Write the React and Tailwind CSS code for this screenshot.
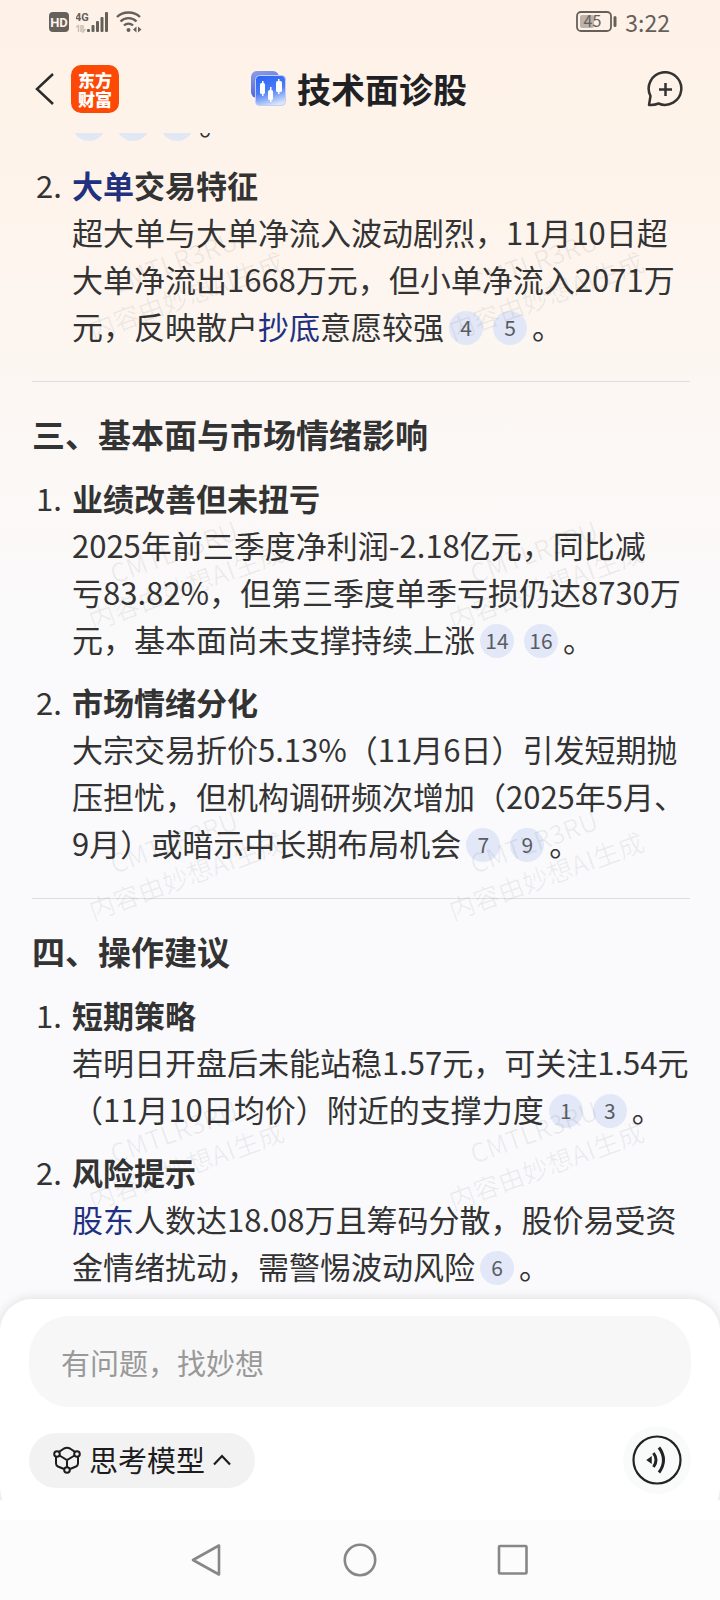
import { Fragment } from 'react'

const sections = [
  {
    items: [
      {
        no: 2,
        title: [{ term: '大单' }, '交易特征'],
        body: ['超大单与大单净流入波动剧烈，11月10日超大单净流出1668万元，但小单净流入2071万元，反映散户', { term: '抄底' }, '意愿较强'],
        refs: [4, 5],
      },
    ],
  },
  {
    heading: '三、基本面与市场情绪影响',
    items: [
      {
        no: 1,
        title: ['业绩改善但未扭亏'],
        body: ['2025年前三季度净利润-2.18亿元，同比减', { keep: '亏83.82%，' }, '但第三季度单季亏损仍达8730万元，基本面尚未支撑持续上涨'],
        refs: [14, 16],
      },
      {
        no: 2,
        title: ['市场情绪分化'],
        body: ['大宗交易折价5.13%（11月6日）引发短期抛压担忧，但机构调研频次增加（2025年5月、9月）或暗示中长期布局机会'],
        refs: [7, 9],
      },
    ],
  },
  {
    heading: '四、操作建议',
    items: [
      {
        no: 1,
        title: ['短期策略'],
        body: ['若明日开盘后未能站稳1.57元，可关注1.54元（11月10日均价）附近的支撑力度'],
        refs: [1, 3],
      },
      {
        no: 2,
        title: ['风险提示'],
        body: [{ term: '股东' }, '人数达18.08万且筹码分散，股价易受资金情绪扰动，需警惕波动风险'],
        refs: [6],
      },
    ],
  },
]

function RichText({ parts }) {
  return parts.map((part, i) => {
    if (part.term) {
      return <a key={i} href="#" className="text-[#22317f]">{part.term}</a>
    }
    if (part.keep) {
      return <span key={i} className="whitespace-nowrap">{part.keep}</span>
    }
    return <Fragment key={i}>{part}</Fragment>
  })
}

function RefChip({ children }) {
  return (
    <button className="mx-[5px] inline-flex size-[34px] items-center justify-center rounded-full bg-[#dfe6f7]/90 align-[3px] text-[21px] leading-none font-normal text-[#5a5c63]">
      {children}
    </button>
  )
}

function StatusBar() {
  return (
    <div className="flex h-11 shrink-0 items-center justify-between pr-[50px] pl-[49px] text-[#66605b]">
      <div className="flex items-center gap-[7px]">
        <svg className="size-5" viewBox="0 0 20 20">
          <rect x="0" y="0" width="20" height="20" rx="4" fill="currentColor" />
          <text x="10" y="15" textAnchor="middle" fontSize="13" fontWeight="700" fill="#fef2e8" fontFamily="Roboto, sans-serif">HD</text>
        </svg>
        {/* signal */}
        <svg className="h-[22px] w-[33px]" viewBox="0 0 33 22" fill="currentColor">
          <text x="-1" y="10" fontSize="11" fontWeight="700" fontFamily="Roboto, sans-serif">4G</text>
          <path d="M0 16l2.500-1.500V21M5 14v7M7 14v7l2.500-3" fill="none" stroke="#c9bfb6" strokeWidth="1.500" />
          <rect x="11" y="18" width="3" height="3" rx="1" />
          <rect x="15.500" y="14" width="3" height="7" rx="1" />
          <rect x="20" y="10" width="3" height="11" rx="1" />
          <rect x="24.500" y="6" width="3" height="15" rx="1" />
          <rect x="29" y="1" width="3" height="20" rx="1" />
        </svg>
        {/* wifi */}
        <svg className="h-[22px] w-[26px]" viewBox="0 0 26 22" fill="none" stroke="currentColor" strokeWidth="2.400">
          <path d="M1 6c6-6 17-6 23 0M4.500 10.500c4.500-4.500 11.500-4.500 16 0M8 14.500c2.500-2.500 6.500-2.500 9 0" />
          <circle cx="12.500" cy="19" r="2" fill="currentColor" stroke="none" />
          <path d="M20.500 15.500v6l-3.500-3zM22 15.500v6l3.500-3z" fill="currentColor" stroke="none" />
        </svg>
      </div>
      <div className="flex items-center gap-2">
        <svg className="h-[22px] w-[41px]" viewBox="0 0 41 22">
          <rect x="1" y="1" width="34" height="19" rx="4" fill="none" stroke="currentColor" strokeWidth="1.800" />
          <rect x="4" y="4" width="14" height="13" rx="2" fill="#bdb3ab" />
          <rect x="37.500" y="5" width="3" height="11" rx="1.500" fill="currentColor" />
          <text x="16.500" y="16" textAnchor="middle" fontSize="16" fill="currentColor" fontFamily="Noto Sans CJK SC, sans-serif">45</text>
        </svg>
        <span className="text-[23px] leading-none">3:22</span>
      </div>
    </div>
  )
}

function Header() {
  return (
    <header className="grid h-[89px] shrink-0 grid-cols-[1fr_auto_1fr] items-center pr-[37px] pl-[35px]">
      <div className="flex items-center gap-[17px]">
        <button aria-label="返回">
          <svg className="h-[34px] w-[19px]" viewBox="0 0 19 34" fill="none" stroke="#2b2b2b" strokeWidth="2.500">
            <path d="M18 2L2 17l16 15" />
          </svg>
        </button>
        <div className="flex size-12 flex-col items-center justify-center rounded-[10px] bg-[#fc4a06] text-[17px] leading-[19px] font-black text-white">
          <span>东方</span>
          <span>财富</span>
        </div>
      </div>
      <div className="flex items-center gap-[10px]">
        <svg className="size-9" viewBox="0 0 36 36">
          <defs>
            <linearGradient id="card-back" x1="0" y1="0" x2="0.300" y2="1">
              <stop offset="0" stopColor="#8f9fe6" />
              <stop offset="1" stopColor="#4763dd" />
            </linearGradient>
            <linearGradient id="card-front" x1="0.300" y1="0" x2="0.600" y2="1">
              <stop offset="0" stopColor="#2f66f5" />
              <stop offset="0.500" stopColor="#4a7cf6" />
              <stop offset="1" stopColor="#dce6fb" />
            </linearGradient>
          </defs>
          <rect x="0" y="0" width="28" height="27" rx="6" fill="url(#card-back)" />
          <rect x="4.500" y="4.500" width="30" height="30" rx="4" fill="url(#card-front)" stroke="#c3cff3" />
          <g fill="#fff">
            <rect x="9" y="12" width="5" height="11" rx="1.500" />
            <rect x="11" y="10" width="1.500" height="15" />
            <rect x="17" y="19" width="5" height="10" rx="1.500" />
            <rect x="19" y="16" width="1.500" height="15" />
            <rect x="25" y="10" width="6" height="11" rx="1.500" />
            <rect x="27" y="8" width="1.500" height="15" />
          </g>
        </svg>
        <h1 className="text-[34px] leading-none font-bold text-[#1f2124]">技术面诊股</h1>
      </div>
      <button aria-label="新建对话" className="justify-self-end">
        <svg className="size-9" viewBox="0 0 36 36" fill="none" stroke="#333" strokeWidth="2.500" strokeLinejoin="round">
          <path d="M2 34l1.500-9A16.300 16.300 0 1 1 11.500 32.500Q7 34.500 2 34z" />
          <path d="M18.500 12v13M12 18.500h13" />
        </svg>
      </button>
    </header>
  )
}

function Watermark() {
  return (
    <div aria-hidden="true" className="pointer-events-none absolute inset-x-0 top-0 grid grid-cols-2">
      {Array.from({ length: 8 }, (_, i) => (
        <div key={i} className="flex h-[290px] items-center justify-center text-center text-[26px] leading-9 text-black/6">
          <div className="-rotate-20 whitespace-nowrap">
            CMTLR3RU
            <br />
            内容由妙想AI生成
          </div>
        </div>
      ))}
    </div>
  )
}

function Answer() {
  return (
    <div className="flex flex-col pr-[30px] pb-[10px] pl-8">
      <p className="pb-4 pl-[35px]">
        <RefChip>&nbsp;</RefChip>
        <RefChip>&nbsp;</RefChip>
        <RefChip>&nbsp;</RefChip>。
      </p>
      {sections.map((section, i) => (
        <section key={i}>
          {i > 0 && <hr className="mt-8 mb-7 border-[#dededf]" />}
          {section.heading && (
            <h2 className="mb-4 text-[33px] leading-[48px] font-bold">{section.heading}</h2>
          )}
          <ol className="flex flex-col gap-4">
            {section.items.map((item) => (
              <li key={item.no} className="flex">
                <span className="w-10 shrink-0 pl-1">{item.no}.</span>
                <div className="min-w-0 flex-1">
                  <h3 className="font-bold">
                    <RichText parts={item.title} />
                  </h3>
                  <p>
                    <RichText parts={item.body} />
                    {item.refs.map((n) => (
                      <RefChip key={n}>{n}</RefChip>
                    ))}
                    。
                  </p>
                </div>
              </li>
            ))}
          </ol>
        </section>
      ))}
    </div>
  )
}

function Composer() {
  return (
    <div className="relative shrink-0 rounded-[32px] bg-white px-[29px] pt-[17px] pb-[26px] shadow-[0_0_12px_rgba(0,0,0,0.12)]">
      <input
        type="text"
        aria-label="提问"
        placeholder="有问题，找妙想"
        className="h-[91px] w-full rounded-[40px] bg-[#f7f7f7] px-8 text-[29px] outline-none placeholder:text-[#999]"
      />
      <div className="mt-[19px] flex items-center justify-between">
        <button className="flex h-[55px] items-center gap-2 rounded-full bg-[#f2f2f2] px-6 text-[29px] text-[#1c1c1e]">
          <svg className="size-7" viewBox="0 0 28 28" fill="none" stroke="currentColor" strokeWidth="2">
            <circle cx="4" cy="8" r="2.800" />
            <circle cx="24" cy="8" r="2.800" />
            <circle cx="14" cy="24" r="2.800" />
            <path d="M6 5.800L11 2.500Q14 1 17 2.500l5 3.300M6.500 9.500L14 14l7.500-4.500M14 14v7M3 11v6.500q0 2 2 3l6 2.500M25 11v6.500q0 2-2 3L17 23" />
          </svg>
          思考模型
          <svg className="h-3 w-[18px]" viewBox="0 0 18 12" fill="none" stroke="currentColor" strokeWidth="2.200">
            <path d="M1 10.500L9 2l8 8.500" />
          </svg>
        </button>
        <button aria-label="语音" className="flex size-[68px] items-center justify-center rounded-full bg-[#f9fafa]">
          <svg className="size-[50px]" viewBox="0 0 50 50" fill="none" stroke="#222326">
            <circle cx="25" cy="25" r="23.500" strokeWidth="2.200" />
            <path d="M15.500 25l3.500-2.500v5z" fill="#222326" strokeWidth="1.500" />
            <path d="M21.500 18q5 7 0 14M27 12.500q9 12.500 0 25" strokeWidth="3" />
          </svg>
        </button>
      </div>
    </div>
  )
}

function NavBar() {
  return (
    <nav className="relative flex h-20 shrink-0 items-center justify-center gap-[120px] bg-[#fcfcfc]">
      <button aria-label="后退">
        <svg className="size-8" viewBox="0 0 32 32" fill="none" stroke="#878787" strokeWidth="2.600" strokeLinejoin="round">
          <path d="M28 1.500v29L2 16z" />
        </svg>
      </button>
      <button aria-label="主屏幕">
        <svg className="size-[34px]" viewBox="0 0 34 34" fill="none" stroke="#878787" strokeWidth="2.600">
          <circle cx="17" cy="17" r="15.200" />
        </svg>
      </button>
      <button aria-label="最近任务">
        <svg className="size-8" viewBox="0 0 32 32" fill="none" stroke="#878787" strokeWidth="2.600">
          <rect x="2" y="2" width="27.500" height="27.500" rx="1" />
        </svg>
      </button>
    </nav>
  )
}

export default function App() {
  return (
    <div className="flex h-screen flex-col overflow-hidden bg-[linear-gradient(to_bottom,#fef2e8_0%,#fef3ea_10%,#fcf7f3_25%,#fafafc_42%,#fafafd_100%)] font-['Noto_Sans_CJK_SC',sans-serif] text-[#333]">
      <StatusBar />
      <Header />
      <main className="relative flex min-h-0 flex-1 flex-col justify-end overflow-hidden text-[31px] leading-[47px] [text-spacing-trim:space-all]">
        <Answer />
        <Watermark />
      </main>
      <Composer />
      {/* safe area under the composer */}
      <div className="relative -mt-5 h-5 shrink-0 bg-white" />
      <NavBar />
    </div>
  )
}
